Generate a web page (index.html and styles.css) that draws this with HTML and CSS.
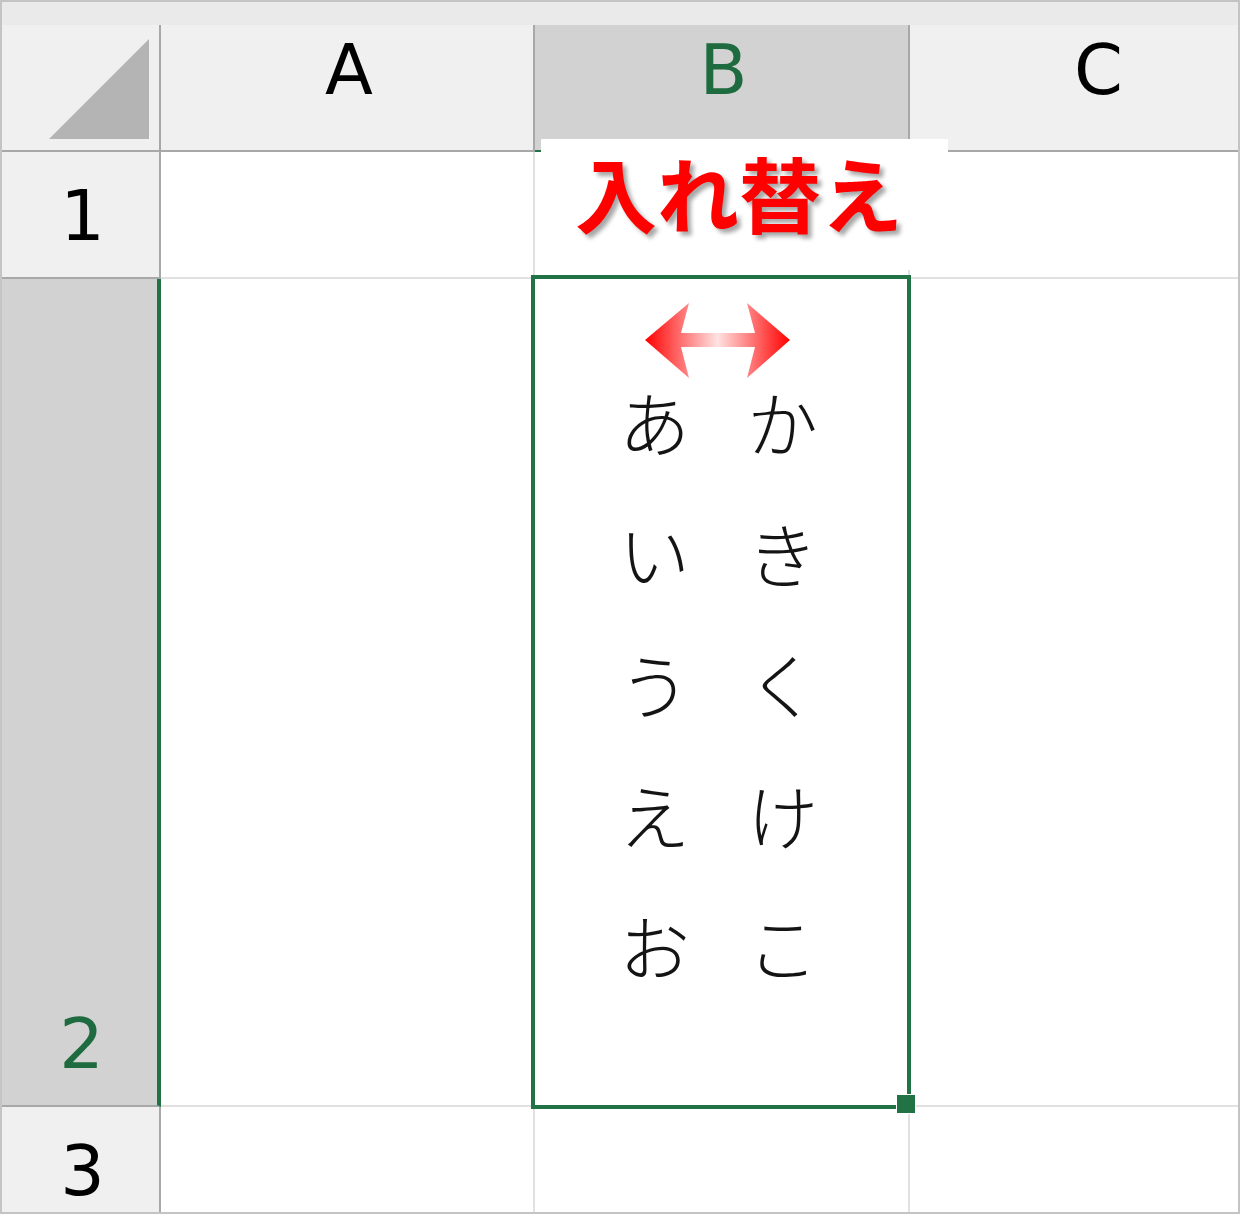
FILE: index.html
```html
<!DOCTYPE html>
<html lang="ja">
<head>
  <meta charset="UTF-8">
  <meta name="viewport" content="width=device-width, initial-scale=1.0">
  <title>入れ替え</title>
  <link rel="stylesheet" href="styles.css">
</head>
<body>
  <div class="frame">
    <div class="top-strip"></div>

    <div class="sheet">
      <!-- header row -->
      <div class="corner">
        <svg class="corner-mark" width="100" height="100" viewBox="0 0 100 100">
          <polygon points="0,100 100,100 100,0" fill="#b4b4b4"/>
        </svg>
      </div>
      <div class="col-head">A</div>
      <div class="col-head active">B</div>
      <div class="col-head">C</div>

      <!-- row 1 -->
      <div class="row-head">1</div>
      <div class="cell"></div>
      <div class="cell"></div>
      <div class="cell"></div>

      <!-- row 2 -->
      <div class="row-head active">2</div>
      <div class="cell"></div>
      <div class="cell selected">
        <svg class="swap-arrow" width="145" height="75" viewBox="0 0 145 75">
          <defs>
            <linearGradient id="arrowFill" x1="0" y1="0" x2="1" y2="0">
              <stop offset="0" stop-color="#ff0000"/>
              <stop offset="0.5" stop-color="#ffe2e2"/>
              <stop offset="1" stop-color="#ff0000"/>
            </linearGradient>
          </defs>
          <polygon points="0,37 44,0 36,30 110,30 102,0 145,37 102,75 110,44 36,44 44,75" fill="url(#arrowFill)"/>
        </svg>
        <div class="kana">
          <span>あ</span><span>か</span>
          <span>い</span><span>き</span>
          <span>う</span><span>く</span>
          <span>え</span><span>け</span>
          <span>お</span><span>こ</span>
        </div>
        <div class="selection"><div class="fill-handle"></div></div>
      </div>
      <div class="cell"></div>

      <!-- row 3 -->
      <div class="row-head">3</div>
      <div class="cell"></div>
      <div class="cell"></div>
      <div class="cell"></div>

      <div class="title-box">入れ替え</div>
    </div>
  </div>
</body>
</html>
```

FILE: styles.css
```css
body {
  margin: 0;
  background: #ffffff;
}
.frame {
  width: 1240px;
  height: 1214px;
  box-sizing: border-box;
  border: 2px solid #c4c4c4;
  overflow: hidden;
  background: #ffffff;
}
.top-strip {
  height: 23px;
  background: #eaeaea;
}
.sheet {
  position: relative;
  display: grid;
  grid-template-columns: 159px 374px 375px 375px;
  grid-template-rows: 127px 127px 828px 127px;
  height: 1187px;
  overflow: hidden;
}
.corner,
.col-head,
.row-head,
.cell {
  box-sizing: border-box;
}
.corner {
  display: flex;
  justify-content: flex-end;
  align-items: flex-end;
  padding: 0 10px 11px 0;
  background: #f0f0f0;
  border-right: 2px solid #a8a8a8;
  border-bottom: 2px solid #a8a8a8;
}
.corner-mark {
  display: block;
}
.col-head {
  display: flex;
  justify-content: center;
  align-items: flex-start;
  padding-top: 10px;
  padding-left: 4px;
  background: #f0f0f0;
  border-right: 2px solid #a8a8a8;
  border-bottom: 2px solid #a8a8a8;
  font-family: "DejaVu Sans", sans-serif;
  font-size: 70px;
  line-height: 70px;
  color: #000000;
}
.col-head.active {
  background: #d2d2d2;
  color: #1d6b3e;
  border-bottom-color: #217346;
}
.row-head {
  display: flex;
  justify-content: center;
  align-items: flex-end;
  padding-bottom: 26px;
  padding-left: 4px;
  background: #f0f0f0;
  border-right: 2px solid #a8a8a8;
  border-bottom: 2px solid #a8a8a8;
  font-family: "DejaVu Sans", sans-serif;
  font-size: 70px;
  line-height: 70px;
  color: #000000;
}
.row-head.active {
  background: #d2d2d2;
  color: #1d6b3e;
  border-right: 4px solid #217346;
}
.cell {
  background: #ffffff;
  border-right: 2px solid #e1e1e1;
  border-bottom: 2px solid #e1e1e1;
}
.cell.selected {
  position: relative;
  display: flex;
  flex-direction: column;
  align-items: center;
  padding-top: 24px;
}
.swap-arrow {
  display: block;
  margin-right: 8px;
}
.kana {
  display: grid;
  grid-template-columns: 128px 128px;
  row-gap: 61px;
  margin-top: 7px;
  margin-right: 6px;
  font-family: "Noto Sans CJK JP", sans-serif;
  font-weight: 300;
  font-size: 71px;
  line-height: 70px;
  color: #141414;
  text-align: center;
}
.selection {
  position: absolute;
  top: -4px;
  left: -4px;
  right: -3px;
  bottom: -4px;
  border: 4px solid #217346;
}
.fill-handle {
  position: absolute;
  right: -9px;
  bottom: -9px;
  width: 20px;
  height: 20px;
  box-sizing: border-box;
  background: #217346;
  border: 1px solid #ffffff;
}
.title-box {
  position: absolute;
  left: 539px;
  top: 114px;
  width: 407px;
  height: 131px;
  box-sizing: border-box;
  display: flex;
  align-items: flex-start;
  padding-top: 12px;
  padding-left: 34px;
  background: #ffffff;
  font-family: "Noto Sans CJK JP", sans-serif;
  font-weight: 700;
  font-size: 82px;
  line-height: 82px;
  color: #ff0000;
  text-shadow: 4px 4px 4px rgba(0, 0, 0, 0.35);
}
```
